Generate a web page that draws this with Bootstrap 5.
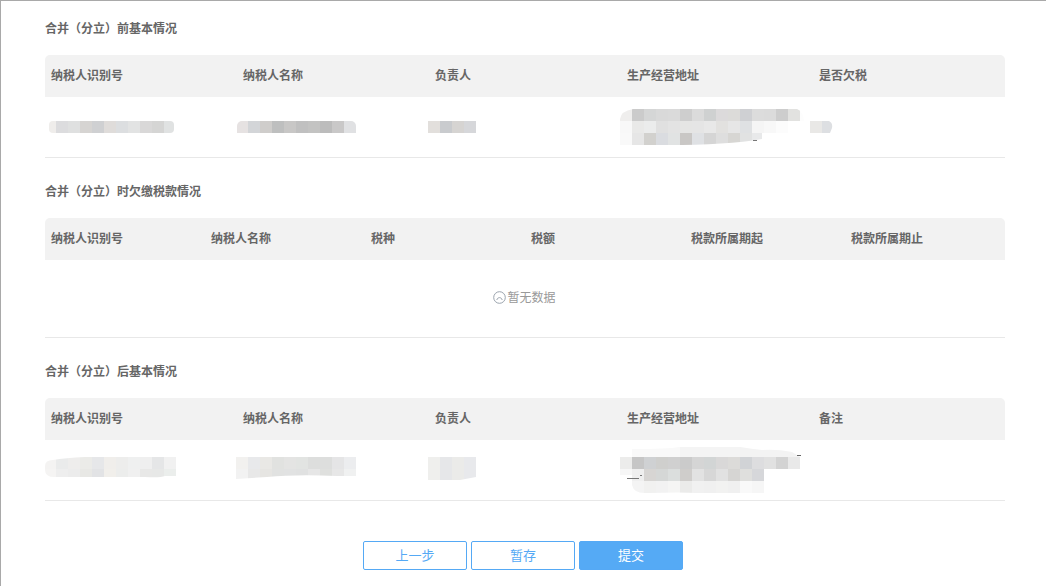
<!DOCTYPE html>
<html lang="zh-CN">
<head>
<meta charset="utf-8">
<title>合并（分立）</title>
<link href="https://cdn.jsdelivr.net/npm/bootstrap@5.3.0/dist/css/bootstrap.min.css" rel="stylesheet">
<style>
html,body{height:100%;overflow:hidden;background:#fff}
body{font-family:"Microsoft YaHei","Noto Sans CJK SC","Liberation Sans",sans-serif;font-size:12px;color:#666}
.shell{border-top:1px solid #a9a9a9;border-left:1px solid #a9a9a9;height:586px}
.inner{padding:0 41px 0 44px}
.block{padding-top:24px;border-bottom:1px solid #e8e8e8}
.block-first{padding-top:18px}
.block-title{font-size:12px;line-height:18px;font-weight:700;color:#666;margin:0 0 18px}
.gridtable{width:100%;table-layout:fixed;border-collapse:separate;border-spacing:0;margin:0}
.gridtable th{height:42px;background:#f2f2f2;padding:0 6px 2px;font-size:12px;font-weight:700;color:#666;vertical-align:middle;text-align:left}
.gridtable th:first-child{border-top-left-radius:5px}
.gridtable th:last-child{border-top-right-radius:5px}
.gridtable td{padding:0;height:60px;vertical-align:top}
.mosaic{display:block;overflow:visible}
.emptybox{height:77px;color:#999;font-size:12px;gap:1px;padding:0 1px 3px 0}
.actions{margin-top:40px;gap:4px;margin-left:-1px}
.act{width:104px;height:29px;padding:0 0 2px;font-size:13px;line-height:25px;border-radius:2px;border:1px solid #55a9f5}
.act-line{background:#fff;color:#55a9f5}
.act-fill{background:#55aaf5;color:#fff}
</style>
</head>
<body>
<div class="shell">
  <div class="inner">
    <section class="block block-first">
      <h6 class="block-title">合并（分立）前基本情况</h6>
      <table class="gridtable">
        <thead><tr><th>纳税人识别号</th><th>纳税人名称</th><th>负责人</th><th>生产经营地址</th><th>是否欠税</th></tr></thead>
        <tbody><tr>
          <td><svg class="mosaic" width="192" height="60"><defs><clipPath id="a1"><rect x="4" y="24" width="125" height="12" rx="4"/></clipPath></defs><g clip-path="url(#a1)" shape-rendering="crispEdges"><rect x="4" y="24" width="7" height="12" fill="#efedeb"/><rect x="11" y="24" width="12" height="12" fill="#dcdcde"/><rect x="23" y="24" width="12" height="12" fill="#dfe0e0"/><rect x="35" y="24" width="12" height="12" fill="#d6d4d2"/><rect x="47" y="24" width="12" height="12" fill="#cfd0d2"/><rect x="59" y="24" width="12" height="12" fill="#dfdcda"/><rect x="71" y="24" width="12" height="12" fill="#dcdee0"/><rect x="83" y="24" width="12" height="12" fill="#e2e3e3"/><rect x="95" y="24" width="12" height="12" fill="#d9d8d8"/><rect x="107" y="24" width="12" height="12" fill="#d5d5d4"/><rect x="119" y="24" width="10" height="12" fill="#e0e2e2"/></g></svg></td>
          <td><svg class="mosaic" width="192" height="60"><defs><clipPath id="a2"><rect x="0" y="24" width="119" height="18" rx="5"/></clipPath></defs><g clip-path="url(#a2)" shape-rendering="crispEdges"><rect x="0" y="24" width="11" height="12" fill="#e6e2e2"/><rect x="11" y="24" width="12" height="12" fill="#d3d5d8"/><rect x="23" y="24" width="12" height="12" fill="#cfcdcb"/><rect x="35" y="24" width="12" height="12" fill="#bebfbf"/><rect x="47" y="24" width="12" height="12" fill="#c8c7c6"/><rect x="59" y="24" width="12" height="12" fill="#c0c0c0"/><rect x="71" y="24" width="12" height="12" fill="#c3c3c2"/><rect x="83" y="24" width="12" height="12" fill="#bcbcbc"/><rect x="95" y="24" width="12" height="12" fill="#c9c8c8"/><rect x="107" y="24" width="12" height="12" fill="#e0e1e3"/></g></svg></td>
          <td><svg class="mosaic" width="192" height="60" shape-rendering="crispEdges"><rect x="-1" y="24" width="12" height="12" fill="#e2dfdc"/><rect x="11" y="24" width="12" height="12" fill="#c9cbce"/><rect x="23" y="24" width="12" height="12" fill="#d6d4d2"/><rect x="35" y="24" width="12" height="12" fill="#d6d7da"/></svg></td>
          <td><svg class="mosaic" width="192" height="60"><defs><clipPath id="a4"><path d="M-7 36V22Q-6 14 6 12H170Q176 14 177 24H202Q206 26 205 31L203 36H135V42Q100 48 40 48H-7Z"/></clipPath></defs><g transform="translate(6 0)"><g clip-path="url(#a4)" shape-rendering="crispEdges"><rect x="-7" y="12" width="12" height="12" fill="#efeeed"/><rect x="5" y="12" width="12" height="12" fill="#cbcbcb"/><rect x="17" y="12" width="12" height="12" fill="#d5d6d6"/><rect x="29" y="12" width="12" height="12" fill="#d9d9d9"/><rect x="41" y="12" width="12" height="12" fill="#dadada"/><rect x="53" y="12" width="12" height="12" fill="#cecece"/><rect x="65" y="12" width="12" height="12" fill="#dbdbdb"/><rect x="77" y="12" width="12" height="12" fill="#cfd1d1"/><rect x="89" y="12" width="12" height="12" fill="#dcdadb"/><rect x="101" y="12" width="12" height="12" fill="#dcdbd9"/><rect x="113" y="12" width="12" height="12" fill="#cfd0d3"/><rect x="125" y="12" width="12" height="12" fill="#dcdcdc"/><rect x="137" y="12" width="12" height="12" fill="#dbdbdb"/><rect x="149" y="12" width="12" height="12" fill="#cdcdcd"/><rect x="161" y="12" width="12" height="12" fill="#e2e2e0"/><rect x="173" y="12" width="8" height="12" fill="#fdfdfd"/><rect x="-7" y="24" width="12" height="12" fill="#f8f8f8"/><rect x="5" y="24" width="12" height="12" fill="#e9e9e8"/><rect x="17" y="24" width="12" height="12" fill="#ebecec"/><rect x="29" y="24" width="12" height="12" fill="#e0e0e0"/><rect x="41" y="24" width="12" height="12" fill="#e3e3e3"/><rect x="53" y="24" width="12" height="12" fill="#e5e5e4"/><rect x="65" y="24" width="12" height="12" fill="#e5e5e5"/><rect x="77" y="24" width="12" height="12" fill="#e8e8e8"/><rect x="89" y="24" width="12" height="12" fill="#e2e1df"/><rect x="101" y="24" width="12" height="12" fill="#e6e6e6"/><rect x="113" y="24" width="12" height="12" fill="#dfe1e3"/><rect x="125" y="24" width="12" height="12" fill="#f5f5f5"/><rect x="137" y="24" width="12" height="12" fill="#f8f8f8"/><rect x="149" y="24" width="12" height="12" fill="#fcfcfc"/><rect x="183" y="24" width="12" height="12" fill="#e9e8e6"/><rect x="195" y="24" width="11" height="12" fill="#dddfe2"/><rect x="-7" y="36" width="12" height="12" fill="#f9f9f9"/><rect x="5" y="36" width="12" height="12" fill="#e6e6e6"/><rect x="17" y="36" width="12" height="12" fill="#d2d1ce"/><rect x="29" y="36" width="12" height="12" fill="#dadce0"/><rect x="41" y="36" width="12" height="12" fill="#e1e3e3"/><rect x="53" y="36" width="12" height="12" fill="#c9c7c5"/><rect x="65" y="36" width="12" height="12" fill="#dfe1e4"/><rect x="77" y="36" width="12" height="12" fill="#d5d5d5"/><rect x="89" y="36" width="12" height="12" fill="#dedede"/><rect x="101" y="36" width="12" height="12" fill="#d7d6d3"/><rect x="113" y="36" width="12" height="12" fill="#e1e2e2"/><rect x="125" y="36" width="12" height="12" fill="#e8e9ea"/></g><rect x="126" y="43" width="4" height="1" fill="#777" shape-rendering="crispEdges"/></g></svg></td>
          <td></td>
        </tr></tbody>
      </table>
    </section>

    <section class="block">
      <h6 class="block-title">合并（分立）时欠缴税款情况</h6>
      <table class="gridtable">
        <thead><tr><th>纳税人识别号</th><th>纳税人名称</th><th>税种</th><th>税额</th><th>税款所属期起</th><th>税款所属期止</th></tr></thead>
      </table>
      <div class="emptybox d-flex align-items-center justify-content-center">
        <svg width="13" height="13" viewBox="0 0 13 13" fill="none" stroke="#9aa3ad" stroke-width="1"><circle cx="6.5" cy="6.5" r="5.8"/><path d="M3.8 9C4.6 5.8 8.4 5.8 9.2 9"/></svg>
        <span>暂无数据</span>
      </div>
    </section>

    <section class="block">
      <h6 class="block-title">合并（分立）后基本情况</h6>
      <table class="gridtable">
        <thead><tr><th>纳税人识别号</th><th>纳税人名称</th><th>负责人</th><th>生产经营地址</th><th>备注</th></tr></thead>
        <tbody><tr>
          <td><svg class="mosaic" width="192" height="60"><defs><clipPath id="c1"><path d="M0 26Q0 20 8 20Q20 18 40 17H131V36H120Q115 38 100 37H12Q0 38 0 30Z"/></clipPath></defs><g clip-path="url(#c1)" shape-rendering="crispEdges"><rect x="0" y="17" width="11" height="12" fill="#f4f3f2"/><rect x="11" y="17" width="12" height="12" fill="#eaebeb"/><rect x="23" y="17" width="12" height="12" fill="#eeedec"/><rect x="35" y="17" width="12" height="12" fill="#ebebe8"/><rect x="47" y="17" width="12" height="12" fill="#e6e7e9"/><rect x="59" y="17" width="12" height="12" fill="#f0eeeb"/><rect x="71" y="17" width="12" height="12" fill="#ededec"/><rect x="83" y="17" width="12" height="12" fill="#eff0f0"/><rect x="95" y="17" width="12" height="12" fill="#efefef"/><rect x="107" y="17" width="12" height="12" fill="#e5e6e7"/><rect x="119" y="17" width="12" height="12" fill="#f1f1f1"/><rect x="0" y="29" width="11" height="12" fill="#f5f4f3"/><rect x="11" y="29" width="12" height="12" fill="#eeeeee"/><rect x="23" y="29" width="12" height="12" fill="#ececec"/><rect x="35" y="29" width="12" height="12" fill="#e8e8e5"/><rect x="47" y="29" width="12" height="12" fill="#e2e3e5"/><rect x="59" y="29" width="12" height="12" fill="#f1efeb"/><rect x="71" y="29" width="12" height="12" fill="#ecedec"/><rect x="83" y="29" width="12" height="12" fill="#f0f0f0"/><rect x="95" y="29" width="12" height="12" fill="#e8e8e7"/><rect x="107" y="29" width="12" height="12" fill="#e7e8e7"/><rect x="119" y="29" width="12" height="12" fill="#ebeeec"/></g></svg></td>
          <td><svg class="mosaic" width="192" height="60"><defs><clipPath id="c2"><path d="M-1 17H119V36H100Q60 34 30 37L-1 39Z"/></clipPath></defs><g clip-path="url(#c2)" shape-rendering="crispEdges"><rect x="-1" y="17" width="12" height="12" fill="#f2f1ef"/><rect x="11" y="17" width="12" height="12" fill="#e8e9eb"/><rect x="23" y="17" width="12" height="12" fill="#e9e8e5"/><rect x="35" y="17" width="12" height="12" fill="#e1e2e0"/><rect x="47" y="17" width="12" height="12" fill="#e4e4e3"/><rect x="59" y="17" width="12" height="12" fill="#e2e4e2"/><rect x="71" y="17" width="12" height="12" fill="#dddedd"/><rect x="83" y="17" width="12" height="12" fill="#dddedd"/><rect x="95" y="17" width="12" height="12" fill="#e5e5e6"/><rect x="107" y="17" width="12" height="12" fill="#ecedef"/><rect x="-1" y="29" width="12" height="12" fill="#f2f2f2"/><rect x="11" y="29" width="12" height="12" fill="#e8e8e8"/><rect x="23" y="29" width="12" height="12" fill="#e6e5e2"/><rect x="35" y="29" width="12" height="12" fill="#e1e2e1"/><rect x="47" y="29" width="12" height="12" fill="#e1e2e2"/><rect x="59" y="29" width="12" height="12" fill="#e0e1e1"/><rect x="71" y="29" width="12" height="12" fill="#e6e6e6"/><rect x="83" y="29" width="12" height="12" fill="#dfe0de"/><rect x="95" y="29" width="12" height="12" fill="#e7e7e7"/><rect x="107" y="29" width="12" height="12" fill="#f0f1f1"/></g></svg></td>
          <td><svg class="mosaic" width="192" height="60"><defs><clipPath id="c3"><path d="M-1 17H47V37L31 40H-1Z"/></clipPath></defs><g clip-path="url(#c3)" shape-rendering="crispEdges"><rect x="-1" y="17" width="12" height="24" fill="#efefed"/><rect x="11" y="17" width="12" height="24" fill="#e6e7e9"/><rect x="23" y="17" width="12" height="24" fill="#ebebe9"/><rect x="35" y="17" width="12" height="24" fill="#e8e9ec"/></g></svg></td>
          <td><svg class="mosaic" width="192" height="60"><defs><clipPath id="c4"><path d="M5 17V9Q40 9 52 7Q90 5 113 7Q125 9 135 10Q150 9 165 12L173 17V29H137V53H70Q55 52 20 53Q7 54 5 45V41H-7V17Z"/></clipPath></defs><g transform="translate(6 0)"><g clip-path="url(#c4)" shape-rendering="crispEdges"><rect x="5" y="7" width="48" height="10" fill="#f9f9f9"/><rect x="53" y="7" width="60" height="10" fill="#f4f4f4"/><rect x="113" y="7" width="62" height="10" fill="#f3f3f3"/><rect x="-7" y="17" width="12" height="12" fill="#ececeb"/><rect x="5" y="17" width="12" height="12" fill="#c6c6c6"/><rect x="17" y="17" width="12" height="12" fill="#cfd1d3"/><rect x="29" y="17" width="12" height="12" fill="#cfcfcd"/><rect x="41" y="17" width="12" height="12" fill="#d0d0d0"/><rect x="53" y="17" width="12" height="12" fill="#cbcbcb"/><rect x="65" y="17" width="12" height="12" fill="#d5d5d5"/><rect x="77" y="17" width="12" height="12" fill="#d2d5d5"/><rect x="89" y="17" width="12" height="12" fill="#d9d8d8"/><rect x="101" y="17" width="12" height="12" fill="#dcdbd9"/><rect x="113" y="17" width="12" height="12" fill="#d1d3d6"/><rect x="125" y="17" width="12" height="12" fill="#dddddf"/><rect x="137" y="17" width="12" height="12" fill="#e1e1e1"/><rect x="149" y="17" width="12" height="12" fill="#d3d3d3"/><rect x="161" y="17" width="12" height="12" fill="#e9e9e9"/><rect x="-7" y="29" width="12" height="6" fill="#f7f7f7"/><rect x="5" y="29" width="12" height="12" fill="#efefef"/><rect x="17" y="29" width="12" height="12" fill="#d7d5d3"/><rect x="29" y="29" width="12" height="12" fill="#d5d7d6"/><rect x="41" y="29" width="12" height="12" fill="#dbdedd"/><rect x="53" y="29" width="12" height="12" fill="#cfcdcb"/><rect x="65" y="29" width="12" height="12" fill="#e2e2e2"/><rect x="77" y="29" width="12" height="12" fill="#d7d7d7"/><rect x="89" y="29" width="12" height="12" fill="#e1e1e1"/><rect x="101" y="29" width="12" height="12" fill="#d6d5d3"/><rect x="113" y="29" width="12" height="12" fill="#dfdfdd"/><rect x="125" y="29" width="12" height="12" fill="#d6d7da"/><rect x="5" y="41" width="12" height="12" fill="#f4f4f4"/><rect x="17" y="41" width="12" height="12" fill="#f1f1f0"/><rect x="29" y="41" width="12" height="12" fill="#f2f2f2"/><rect x="41" y="41" width="12" height="12" fill="#f5f5f4"/><rect x="53" y="41" width="12" height="12" fill="#ebebea"/><rect x="65" y="41" width="12" height="12" fill="#f1f1f1"/><rect x="77" y="41" width="12" height="12" fill="#f0f0f0"/><rect x="89" y="41" width="12" height="12" fill="#f2f2f1"/><rect x="101" y="41" width="12" height="12" fill="#f0f0f0"/><rect x="113" y="41" width="12" height="12" fill="#f9f9f9"/><rect x="125" y="41" width="12" height="12" fill="#f6f6f6"/></g><g shape-rendering="crispEdges"><rect x="170" y="15" width="4" height="1" fill="#666"/><rect x="0" y="38" width="12" height="1" fill="#777"/><rect x="13" y="35" width="2" height="1" fill="#777"/></g></g></svg></td>
          <td></td>
        </tr></tbody>
      </table>
    </section>
  </div>
  <div class="actions d-flex justify-content-center">
    <button type="button" class="btn act act-line">上一步</button>
    <button type="button" class="btn act act-line">暂存</button>
    <button type="button" class="btn act act-fill">提交</button>
  </div>
</div>
<script src="https://cdn.jsdelivr.net/npm/bootstrap@5.3.0/dist/js/bootstrap.bundle.min.js"></script>
</body>
</html>
